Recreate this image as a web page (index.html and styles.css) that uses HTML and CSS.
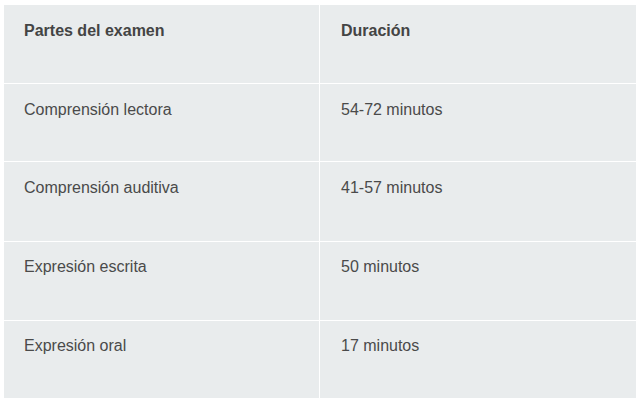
FILE: index.html
```html
<!DOCTYPE html>
<html lang="es">
<head>
<meta charset="utf-8">
<link rel="stylesheet" href="styles.css">
</head>
<body>
<div class="wrap">
  <div class="table">
    <div class="cell head">Partes del examen</div>
    <div class="cell head col2">Duración</div>
    <div class="cell">Comprensión lectora</div>
    <div class="cell col2">54-72 minutos</div>
    <div class="cell">Comprensión auditiva</div>
    <div class="cell col2">41-57 minutos</div>
    <div class="cell low">Expresión escrita</div>
    <div class="cell col2 low">50 minutos</div>
    <div class="cell low">Expresión oral</div>
    <div class="cell col2 low">17 minutos</div>
  </div>
</div>
</body>
</html>
```
FILE: styles.css
```css
html, body {
  margin: 0;
  background: #ffffff;
}
.wrap {
  padding: 5px 5px 4px 4px;
}
.table {
  display: grid;
  grid-template-columns: 315px 1fr;
  grid-template-rows: 78px 77px 79px 78px 77px;
  gap: 1px;
  background: #ffffff;
}
.cell {
  background: #e9eced;
  padding: 16px 20px 0 20px;
  font-family: "Liberation Sans", Arial, sans-serif;
  font-size: 16px;
  line-height: 20px;
  color: #4a4a4a;
}
.col2 {
  padding-left: 21px;
}
.low {
  padding-top: 15px;
}
.head {
  font-weight: bold;
  padding-top: 16px;
  color: #444444;
}
```
